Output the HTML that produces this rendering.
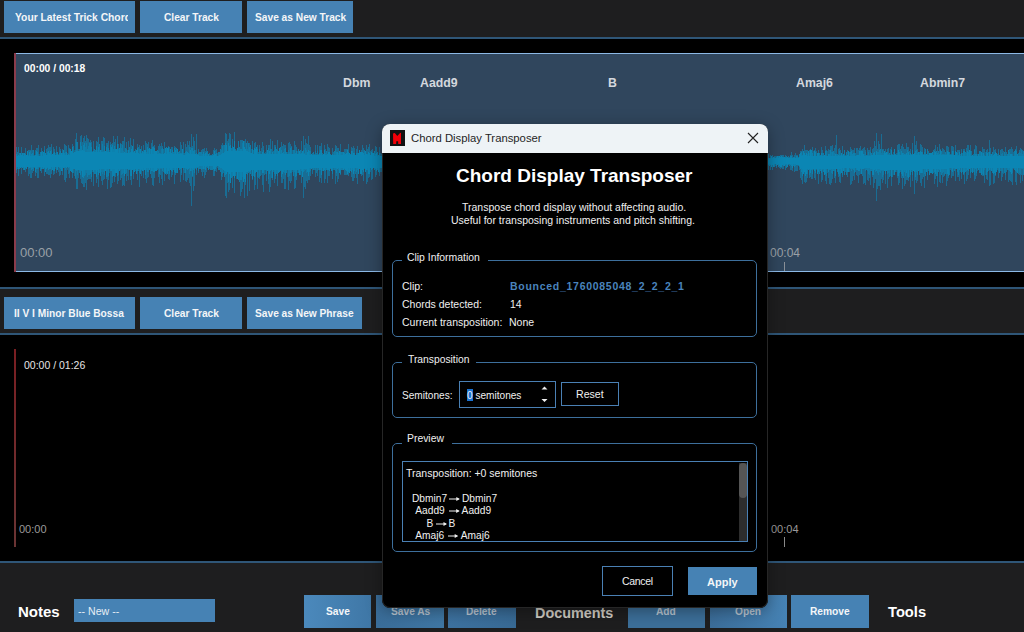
<!DOCTYPE html>
<html><head><meta charset="utf-8">
<style>
*{margin:0;padding:0;box-sizing:border-box}
html,body{width:1024px;height:632px;overflow:hidden;background:#000;font-family:"Liberation Sans",sans-serif}
.a{position:absolute}
.tb{position:absolute;left:0;width:1024px;background:#1e1e1f}
.ln{position:absolute;left:0;width:1024px;background:#2f5677}
.btn{position:absolute;background:#4682b4;color:#f4f6f8;font-weight:bold;font-size:10.2px;text-align:center;white-space:nowrap;overflow:hidden}
.t{position:absolute;white-space:pre;line-height:1}
</style></head><body>
<!-- top toolbar -->
<div class="tb" style="top:0;height:37px"></div>
<div class="ln" style="top:37px;height:2px"></div>
<div class="btn" style="left:4px;top:1px;width:131px;height:32px"><div class="a" style="left:11px;top:0;width:113px;height:32px;overflow:hidden"><span class="t" style="left:0;top:12px;font-size:10.3px">Your Latest Trick Chord</span></div></div>
<div class="btn" style="left:140px;top:1px;width:102px;height:32px"><span class="t" style="left:24px;top:12px;">Clear Track</span></div>
<div class="btn" style="left:247px;top:1px;width:106px;height:32px"><span class="t" style="left:8px;top:12px;">Save as New Track</span></div>

<!-- waveform panel 1 -->
<div class="a" style="left:14px;top:53px;width:1010px;height:219px;background:#30465d;border-top:1px solid #8cb9e6;border-bottom:1px solid #8cb9e6"></div>
<div class="a" style="left:14px;top:53px;width:2px;height:219px;background:#8a3c4c"></div>
<svg class="a" style="left:0;top:0" width="1024" height="300" viewBox="0 0 1024 300">
<path d="M16 147.0V172.7M18 146.7V176.2M21 147.3V173.5M25 148.4V172.3M28 150.4V176.1M29 150.4V174.2M30 150.3V177.9M31 145.2V177.6M32 149.8V173.2M35 150.2V175.9M36 147.8V173.0M37 147.7V178.3M38 145.4V178.1M41 147.9V173.1M44 145.5V176.2M46 149.4V174.1M47 148.1V173.9M48 144.7V175.1M49 146.8V175.2M50 147.4V177.7M51 144.2V174.1M53 146.7V174.5M54 149.3V173.6M56 145.7V172.6M59 146.5V175.9M60 148.6V175.0M62 148.9V174.6M64 143.9V179.6M65 144.5V181.6M66 146.2V177.9M68 145.0V174.2M69 147.8V177.5M72 143.9V178.3M75 139.1V179.4M76 132.8V188.6M77 141.6V189.0M80 135.5V178.8M81 135.0V183.3M82 141.6V183.8M83 138.2V186.8M84 136.4V187.3M85 141.3V183.4M86 134.7V189.7M87 138.1V179.6M88 138.6V178.5M89 142.1V179.2M90 139.5V178.8M91 142.2V181.7M93 141.4V186.0M96 140.7V182.9M97 142.2V179.2M98 137.4V187.1M101 141.1V181.3M102 141.0V184.8M103 136.8V180.4M104 138.4V178.6M106 142.8V178.7M107 143.4V188.9M108 141.1V180.0M110 141.7V188.2M111 143.5V186.8M112 143.0V182.7M113 136.0V175.5M114 142.2V182.0M115 138.6V177.4M117 136.1V183.6M118 143.8V181.4M120 143.2V180.4M121 144.0V178.4M122 141.2V186.1M123 140.6V184.6M124 136.7V186.1M126 141.6V180.6M128 140.9V179.6M130 138.2V179.7M131 144.9V184.8M133 139.1V178.8M137 144.4V180.2M139 145.0V186.5M141 146.0V176.0M143 144.6V178.1M145 141.4V178.5M146 143.3V182.9M147 144.0V177.7M148 142.2V177.4M151 142.6V177.5M152 140.2V185.4M153 145.8V185.7M154 145.0V177.7M158 146.4V176.9M159 144.0V182.6M160 145.6V175.2M161 142.7V178.7M162 145.6V185.0M164 141.8V180.6M166 147.1V175.2M168 145.6V178.7M169 147.0V180.1M171 146.8V176.8M172 146.7V175.4M174 145.8V183.9M175 146.9V174.6M180 142.1V181.5M181 145.2V174.8M183 142.4V179.8M185 144.3V180.7M186 147.3V181.8M187 140.7V180.1M188 145.4V178.1M189 141.2V181.5M189 143.0V183.0M190 146.6V186.1M191 142.6V185.7M191 134.0V206.0M192 145.8V176.9M193 137.0V191.0M194 145.6V175.1M194 141.0V186.0M196 148.3V174.5M196 134.0V170.1M198 149.2V172.7M201 150.3V171.6M202 149.2V176.3M203 149.0V172.2M204 148.0V178.4M205 151.0V175.0M206 148.1V172.4M213 149.7V176.2M214 148.3V175.8M215 149.7V171.0M216 149.1V172.0M221 144.9V180.1M222 143.4V177.0M225 133.4V196.2M226 134.4V198.0M228 139.4V191.6M229 132.8V183.7M229 137.0V190.0M230 133.7V183.1M232 138.5V188.1M234 132.2V192.5M240 140.0V196.2M241 139.6V191.9M242 140.4V189.1M244 140.7V197.5M245 139.4V185.1M247 141.1V195.9M249 143.4V191.3M252 140.9V179.5M254 143.0V189.6M255 141.6V184.8M257 145.1V188.5M259 144.9V179.0M262 142.3V184.9M263 145.5V191.5M266 144.5V180.9M268 145.4V184.1M269 144.9V191.5M270 139.1V187.0M272 141.4V179.9M274 145.2V182.5M275 144.8V178.8M277 140.1V186.4M281 141.8V183.2M282 146.1V183.1M283 143.8V179.0M284 145.0V189.0M285 145.0V188.7M288 142.9V189.6M289 142.0V181.1M290 144.4V182.6M291 146.4V181.4M294 140.8V189.1M295 145.3V188.0M296 146.9V180.4M301 141.0V183.0M303 141.3V177.6M303 136.0V198.0M304 145.4V187.2M305 144.6V181.2M305 139.0V189.0M306 143.0V181.0M307 144.4V182.6M308 145.3V179.7M308 136.0V175.6M309 145.2V179.5M310 146.5V175.9M315 145.4V176.9M317 145.3V176.4M319 145.7V182.2M320 146.1V177.5M321 143.2V183.3M324 144.9V182.8M325 148.9V179.3M327 144.2V183.3M328 146.7V176.2M329 147.9V176.1M332 148.1V179.0M335 144.7V184.1M336 145.5V176.4M337 148.1V181.5M338 148.4V178.6M340 144.4V174.6M344 149.0V174.6M345 149.3V175.1M346 149.4V174.8M347 149.1V174.7M348 144.1V175.5M351 146.7V176.8M352 147.9V180.5M353 146.0V180.8M354 148.3V178.4M356 148.6V178.3M357 146.1V184.2M361 149.7V176.3M362 145.2V175.1M363 148.1V180.8M366 144.8V183.5M367 148.5V181.9M368 146.9V178.0M369 144.3V176.5M371 149.6V179.8M372 148.8V179.0M375 145.8V176.6M376 146.7V175.2M379 147.2V176.2M768 153.9V170.0M770 154.8V169.7M772 155.4V169.7M774 155.7V167.3M776 155.6V168.4M779 155.5V168.4M780 154.9V169.4M781 154.6V167.6M782 155.1V168.5M783 155.2V169.0M785 154.7V169.9M790 155.0V169.7M791 152.4V169.9M792 154.7V171.0M794 155.1V171.8M795 152.9V170.8M796 154.7V171.3M797 154.9V170.9M799 153.5V170.3M800 150.6V178.0M801 150.5V179.5M802 149.0V184.3M804 145.1V181.7M805 150.0V183.1M806 149.9V182.4M807 149.8V178.0M809 149.8V177.9M810 149.0V176.6M811 150.0V179.2M812 146.9V178.7M814 149.6V178.3M815 147.5V179.5M818 149.9V184.4M821 147.3V182.3M822 149.6V179.9M825 146.3V181.0M826 149.8V183.9M828 149.3V177.8M829 150.0V184.0M830 145.6V184.9M831 146.4V182.6M832 145.0V178.5M834 147.7V178.3M835 145.1V183.2M836 135.0V169.3M838 148.5V176.6M839 148.4V182.3M840 149.5V182.7M842 145.5V177.2M847 149.5V177.1M850 146.8V185.1M851 149.3V183.8M852 149.6V180.5M853 150.3V176.0M854 147.8V179.5M856 147.6V175.3M857 147.5V175.5M858 149.8V182.8M859 148.2V175.2M860 146.4V174.2M861 149.7V174.4M862 149.0V175.5M863 147.6V184.0M864 146.5V183.4M865 149.8V184.6M867 148.3V179.7M868 150.0V181.4M869 149.8V177.9M870 147.4V184.8M872 149.0V176.5M873 148.1V187.6M874 149.6V178.8M874 141.0V183.0M875 146.2V178.5M876 133.0V201.0M877 148.5V188.8M878 141.0V186.0M879 143.9V186.2M880 148.6V189.8M881 147.0V178.5M881 134.0V173.0M882 149.0V182.5M883 148.9V180.3M885 148.9V183.7M887 148.9V188.2M888 147.8V179.1M891 147.0V185.7M897 145.3V178.2M898 143.5V184.5M899 144.0V182.5M901 145.6V178.1M902 143.6V189.1M903 147.1V178.2M904 148.8V185.5M905 148.5V183.6M906 143.4V180.0M907 147.4V179.5M908 147.0V181.4M910 148.5V186.5M912 144.7V178.1M912 143.0V181.0M914 149.0V182.0M914 136.0V194.0M915 144.8V179.5M916 148.8V183.4M916 141.0V183.0M917 148.9V181.1M920 144.2V182.6M921 144.8V185.5M922 147.3V179.1M924 147.7V188.4M927 148.6V179.5M934 148.6V184.0M935 145.4V179.1M937 146.6V186.7M939 143.8V181.6M940 148.6V183.2M942 148.2V182.5M943 149.1V176.7M944 149.6V176.4M946 145.5V185.8M947 145.5V180.8M948 147.1V177.9M951 146.0V177.7M952 146.4V175.7M953 147.3V175.8M955 145.1V180.6M957 149.9V176.6M958 149.9V177.0M959 149.8V181.0M961 148.7V178.8M963 149.1V175.1M964 148.8V184.3M966 147.6V180.6M967 144.7V179.2M968 144.6V175.2M970 145.0V178.0M974 149.4V180.6M975 144.8V179.4M976 146.1V176.1M982 146.7V175.8M983 149.2V175.9M984 149.1V183.2M986 149.9V178.6M987 148.8V180.0M989 146.3V179.5M989 140.0V186.0M990 147.8V184.9M993 147.3V183.9M994 149.9V183.2M995 149.4V175.8M998 148.7V178.4M1001 148.7V181.3M1002 149.2V176.7M1005 146.9V179.8M1008 149.9V182.2M1009 149.0V180.0M1010 148.8V181.1M1011 147.4V181.6M1012 149.2V185.4M1015 149.3V181.5M1016 146.2V185.0M1019 149.8V175.1M1020 148.3V183.0M1021 149.4V175.1M1022 149.8V181.2" stroke="#0f7eac" stroke-opacity="0.7" stroke-width="1" fill="none" shape-rendering="crispEdges"/><path d="M18 155.0V168.6M20 152.6V167.8M21 155.1V167.2M22 152.6V168.0M24 153.4V169.8M26 154.8V168.5M27 151.3V167.1M29 151.5V168.4M35 154.6V171.9M36 151.0V169.0M41 151.9V169.2M43 151.9V168.6M45 153.4V171.8M46 154.5V169.2M48 151.1V169.9M49 153.0V168.8M50 151.0V168.9M52 154.3V169.7M54 151.7V170.5M57 151.5V169.9M61 153.2V170.8M63 149.7V167.7M66 152.0V168.0M70 149.3V170.7M71 151.4V171.9M72 146.8V172.9M82 150.1V177.2M93 150.8V171.9M96 145.5V177.0M98 146.8V174.7M100 149.7V176.1M105 150.8V170.9M111 146.8V170.7M115 148.7V173.0M116 149.0V173.2M117 144.0V176.3M119 147.9V171.3M124 151.6V176.2M128 150.0V169.6M131 148.9V176.2M132 145.9V170.4M134 151.4V171.9M136 150.0V174.4M137 147.6V170.9M140 149.4V173.7M142 151.3V171.1M144 149.6V170.0M145 149.9V174.6M149 147.9V169.5M151 148.5V170.8M154 148.4V172.2M155 150.6V171.4M156 150.8V171.4M164 152.9V172.5M165 148.0V173.7M167 147.7V174.3M168 147.3V170.9M170 148.7V169.6M171 153.4V171.4M175 149.6V173.1M177 148.9V173.0M182 149.2V168.2M187 151.6V170.4M188 153.0V169.1M190 150.0V170.8M203 151.8V169.3M205 153.2V169.7M208 153.5V169.8M213 154.7V169.0M214 151.3V171.0M215 153.8V169.2M226 145.0V174.1M229 145.6V174.3M230 144.5V182.5M233 146.7V176.3M234 140.6V177.8M237 147.9V179.4M243 141.1V182.0M244 147.4V179.4M245 149.3V182.1M252 149.2V178.6M254 147.5V177.3M255 148.7V173.0M256 146.9V172.3M262 151.7V172.8M267 150.1V171.3M269 151.4V174.4M272 151.8V177.5M278 151.3V173.4M279 148.0V171.7M282 152.8V173.6M299 151.1V174.6M302 151.3V176.5M307 152.1V171.6M308 150.2V175.6M311 154.0V169.3M319 153.2V169.8M321 149.5V174.8M323 153.8V170.7M324 149.9V169.7M327 153.7V169.7M328 152.2V169.5M329 152.4V170.6M331 154.5V170.6M337 151.9V168.6M339 151.1V173.4M343 152.3V170.4M345 154.0V170.3M346 152.9V171.0M347 149.8V173.5M349 152.6V172.7M351 150.7V171.6M353 152.6V174.2M358 152.7V173.5M359 150.2V169.0M360 151.5V173.9M361 152.2V174.2M362 152.2V170.4M363 153.4V172.1M365 150.9V171.5M366 154.1V170.4M368 151.7V173.6M369 153.3V173.9M371 151.6V169.5M372 152.6V169.0M373 153.4V168.3M376 152.6V171.2M378 154.5V172.0M771 155.9V166.6M772 157.8V164.6M773 156.8V167.1M777 156.3V164.7M779 155.7V165.9M780 157.1V166.9M781 155.6V166.8M782 156.6V164.9M784 156.6V165.9M787 157.3V167.0M792 157.5V167.7M800 153.4V168.8M803 151.0V173.6M804 152.5V171.9M805 154.8V175.6M806 152.9V173.8M808 151.3V169.7M810 150.2V173.0M814 151.1V171.4M817 153.3V174.0M818 153.2V172.0M821 152.7V172.5M824 154.5V174.5M828 154.4V171.7M835 153.8V175.7M838 154.6V173.7M841 152.9V172.5M843 154.0V170.9M847 154.7V172.2M848 150.5V171.5M857 155.3V169.8M858 154.5V170.7M859 151.0V170.5M861 151.0V173.7M862 151.2V169.2M863 153.9V169.3M873 152.7V175.4M874 151.6V170.1M876 150.7V171.1M884 150.9V170.8M885 152.9V173.7M886 152.2V170.7M891 150.0V176.5M894 149.4V175.3M898 149.7V176.2M902 153.0V176.3M906 153.1V172.9M908 151.8V177.7M910 153.0V174.5M913 154.1V170.8M914 153.4V172.3M918 151.9V171.2M920 151.0V172.9M921 152.2V173.3M926 154.1V171.8M929 152.7V175.2M930 152.7V173.1M931 153.4V172.8M932 152.3V173.5M935 151.7V173.6M940 149.7V172.0M947 150.5V174.0M948 151.7V175.8M952 150.5V172.2M955 150.6V169.3M956 152.1V169.1M959 152.0V170.4M961 152.8V173.2M967 150.6V169.9M969 150.0V168.8M972 154.6V173.4M978 154.3V170.0M981 151.9V174.6M983 152.5V174.8M987 153.0V172.0M989 151.9V170.0M991 154.3V171.1M993 154.7V173.9M994 153.8V172.8M995 152.0V174.5M996 152.7V171.5M999 154.8V172.6M1010 154.0V171.5M1011 154.0V174.0M1017 153.9V172.6" stroke="#0b86b4" stroke-opacity="1.0" stroke-width="1" fill="none" shape-rendering="crispEdges"/><path d="M16 153.5V169.8M19 152.7V169.0M23 153.0V170.3M25 153.8V168.2M31 154.3V169.8M32 153.1V168.9M33 150.4V171.0M37 152.1V168.9M40 152.2V170.5M42 151.2V169.0M44 150.0V167.8M47 151.9V167.9M53 152.5V171.4M59 153.2V167.5M60 150.6V169.2M62 152.5V170.6M64 153.0V168.4M68 154.3V168.3M79 149.1V172.8M80 141.6V175.1M81 145.9V171.1M83 144.5V178.0M84 143.2V176.1M90 143.1V174.1M91 147.3V176.8M94 149.1V174.2M95 150.1V174.3M99 144.0V172.6M104 145.7V174.9M106 146.5V176.8M108 147.8V175.7M110 144.9V171.3M112 144.7V176.6M113 148.9V175.5M114 145.8V175.6M125 148.0V173.8M129 147.3V169.9M130 151.9V176.4M133 151.6V173.7M141 152.5V169.6M143 151.7V170.7M147 146.8V171.9M150 149.0V173.6M152 147.1V171.1M153 147.1V171.8M157 149.6V170.0M159 153.1V174.1M162 147.6V170.8M169 151.8V174.0M172 149.9V172.1M173 151.8V169.5M174 147.9V171.8M176 147.9V173.2M178 152.3V168.4M179 151.0V169.8M180 152.8V169.2M185 152.1V172.8M186 151.1V168.5M192 147.7V175.7M193 150.7V169.6M194 150.0V173.0M196 153.1V170.1M197 153.6V168.2M199 151.9V169.2M200 152.2V169.3M206 152.0V167.1M207 151.3V168.1M210 154.7V169.9M211 154.9V170.2M212 153.9V169.9M216 153.1V167.0M218 152.3V170.0M219 151.7V169.8M220 148.7V171.5M224 145.0V176.6M225 142.5V174.5M228 143.2V181.7M231 148.0V177.5M235 149.2V176.2M238 140.8V179.5M239 146.9V182.0M240 148.6V180.0M241 148.8V179.9M246 142.8V174.0M248 142.8V172.7M249 146.8V172.0M250 145.0V174.4M263 149.9V173.3M270 148.9V171.0M275 146.5V176.0M276 148.5V173.5M280 147.2V170.7M281 150.2V177.2M283 152.3V172.2M285 147.8V174.7M286 151.7V172.8M290 148.2V172.5M293 149.9V176.1M295 152.5V177.4M296 151.4V175.9M298 149.3V173.3M300 149.6V174.7M301 153.1V170.5M303 149.6V171.7M309 151.0V171.5M313 151.8V169.7M320 149.5V170.3M326 150.9V169.9M330 154.3V169.0M332 153.5V173.9M334 151.3V170.2M336 151.8V172.7M340 152.1V173.6M341 151.6V169.9M342 152.0V170.1M344 153.0V169.0M348 151.7V171.9M350 154.3V170.8M354 152.5V171.2M364 150.4V168.7M367 153.7V170.0M374 151.2V170.3M375 153.9V168.6M377 152.0V169.8M768 157.7V165.4M769 158.0V166.1M770 158.0V165.3M776 156.9V166.1M778 156.4V166.7M783 157.4V166.3M786 155.7V167.5M790 155.7V164.8M791 156.1V166.0M793 157.1V165.9M794 156.8V166.8M796 155.8V164.9M797 156.4V164.9M801 151.5V171.9M802 154.5V175.9M811 150.3V170.3M812 153.1V173.8M815 152.0V172.8M819 153.1V174.1M820 154.6V170.5M823 152.5V172.3M825 150.7V174.2M829 153.7V170.1M830 150.3V170.3M832 152.0V173.6M833 151.1V170.8M837 154.0V171.7M844 150.4V175.1M846 152.4V174.7M850 152.1V169.2M851 151.3V171.2M852 154.1V168.9M853 153.2V170.0M854 153.1V173.3M856 154.5V169.8M860 151.0V169.4M866 154.8V170.0M871 152.6V170.7M872 154.7V174.8M889 153.2V176.7M895 153.5V172.3M899 151.7V173.3M901 150.6V174.3M904 153.8V172.0M912 150.1V174.8M915 151.1V177.0M917 153.1V174.7M919 151.8V174.8M922 152.0V173.0M925 149.3V176.0M934 150.9V172.2M936 150.8V176.4M937 152.8V176.4M938 151.2V171.6M939 154.2V169.9M941 151.1V175.2M945 151.8V173.8M949 151.5V175.3M954 154.6V171.2M957 153.3V171.8M958 154.9V174.7M963 151.0V174.0M964 151.0V172.6M965 152.2V171.6M968 152.4V170.7M970 151.4V173.4M975 153.9V169.2M976 154.4V172.7M979 150.6V172.8M980 150.5V173.4M986 151.5V174.6M992 151.9V173.4M1004 151.8V172.7M1007 153.6V170.2M1008 150.2V169.6M1014 151.0V169.8M1015 150.3V171.4M1023 150.7V174.5" stroke="#0b86b4" stroke-opacity="0.85" stroke-width="1" fill="none" shape-rendering="crispEdges"/><path d="M17 151.8V169.4M34 155.0V168.0M56 152.3V169.8M73 146.3V173.4M76 142.0V171.0M87 148.9V177.3M88 146.2V174.5M89 143.1V174.8M118 149.1V174.6M120 144.3V169.9M122 145.1V173.6M126 149.0V173.3M135 149.3V171.2M138 146.9V171.2M146 151.9V170.1M148 149.4V171.9M158 151.4V169.0M163 149.1V171.8M166 147.4V172.6M181 153.0V172.6M184 153.3V172.6M191 147.6V170.5M198 153.1V171.4M201 151.9V169.5M202 154.1V168.5M204 154.4V169.3M209 153.1V169.0M222 146.2V173.6M223 144.8V173.0M232 145.9V176.6M253 149.8V176.3M257 148.7V177.3M258 152.3V178.1M259 149.0V176.6M260 150.7V175.8M264 152.6V174.7M266 152.9V174.0M268 148.2V178.5M271 149.3V177.9M273 150.7V172.1M274 149.9V173.8M277 149.7V176.4M294 150.2V172.4M305 148.1V169.5M312 152.7V174.0M314 154.1V170.3M316 152.6V173.4M318 153.6V169.9M322 153.4V170.8M325 153.0V171.0M333 151.6V169.9M352 151.4V169.7M355 154.5V173.9M356 152.5V171.9M357 153.1V169.9M379 153.0V172.5M382 154.9V170.3M785 156.7V165.0M788 156.1V165.1M789 156.8V166.2M795 157.6V166.4M798 156.7V165.6M799 154.3V166.8M836 153.5V169.3M839 150.5V175.8M840 154.5V173.9M842 154.9V175.4M845 155.0V172.2M849 151.9V172.1M855 152.6V171.9M867 154.5V171.0M868 152.3V174.0M870 152.1V171.2M875 154.5V171.7M877 151.5V173.1M878 151.9V175.2M879 149.7V171.5M880 149.4V172.7M887 151.7V173.6M892 154.2V176.5M900 149.1V172.1M903 152.8V177.6M905 154.1V176.1M907 149.8V176.9M909 151.0V176.5M911 154.1V171.5M916 150.0V172.2M923 154.3V176.8M924 152.0V173.7M928 151.3V170.6M933 150.2V172.6M942 153.9V173.4M943 154.0V171.5M950 153.9V170.3M960 154.0V172.1M962 152.6V172.0M966 152.7V171.2M971 151.2V172.4M973 153.9V171.5M974 150.1V174.5M988 152.2V171.2M997 154.1V169.8M1000 150.3V171.4M1006 151.6V172.3M1009 151.7V171.4M1016 151.1V172.1M1018 152.9V174.0M1022 154.1V169.1" stroke="#0b86b4" stroke-opacity="0.7" stroke-width="1" fill="none" shape-rendering="crispEdges"/><path d="M28 155.0V168.9M30 150.8V167.7M38 154.3V169.0M39 153.7V168.0M51 150.1V171.0M55 152.5V169.1M58 154.0V171.5M65 152.4V170.3M67 152.9V169.5M69 149.3V172.6M74 149.8V176.4M75 149.8V177.7M77 141.6V174.6M78 149.2V177.8M85 146.8V175.0M86 142.8V172.6M92 150.7V172.4M97 149.9V171.9M101 150.2V172.0M102 143.8V174.3M103 151.2V171.7M107 144.8V177.4M109 149.8V172.8M121 148.0V175.2M123 151.2V172.8M127 150.1V176.1M139 148.9V173.3M160 152.7V169.3M161 149.1V169.4M183 153.3V169.8M189 147.1V174.1M195 150.1V169.0M217 152.9V168.0M221 150.1V175.5M227 141.2V183.0M236 149.6V179.4M242 142.7V176.8M247 148.8V174.5M251 148.6V175.5M261 147.8V174.8M265 151.9V174.4M284 148.6V172.5M287 152.3V177.1M288 149.6V176.7M289 151.8V175.8M291 147.3V172.6M292 150.2V171.7M297 150.9V172.6M304 152.6V171.3M306 150.3V173.3M310 150.7V171.3M315 150.7V170.3M317 151.4V171.3M335 149.4V171.2M338 153.2V170.0M370 150.8V172.4M380 153.3V171.6M381 153.5V172.2M774 157.2V166.7M775 155.8V166.3M807 154.3V174.4M809 153.2V174.9M813 151.1V170.0M816 151.1V170.2M822 152.5V170.3M826 150.5V175.5M827 151.0V173.4M831 151.9V172.9M834 153.2V170.7M864 154.4V169.4M865 152.1V171.0M869 154.9V175.3M881 152.9V171.1M882 150.4V176.5M883 152.9V174.7M888 153.6V172.8M890 149.4V175.6M893 151.9V175.3M896 152.7V171.8M897 153.0V175.8M927 149.4V174.9M944 154.3V174.8M946 153.7V174.0M951 154.0V171.4M953 151.4V169.4M977 154.1V170.9M982 153.4V174.2M984 154.5V170.3M985 151.5V174.9M990 153.8V169.9M998 152.9V171.1M1001 153.5V170.5M1002 153.1V173.2M1003 151.2V173.6M1005 154.4V174.9M1012 154.4V173.0M1013 151.8V169.1M1019 152.1V172.9M1020 152.7V173.9M1021 150.3V169.1" stroke="#0b86b4" stroke-opacity="0.55" stroke-width="1" fill="none" shape-rendering="crispEdges"/><path d="M16 156.0V166.5M17 156.0V166.5M18 156.0V166.5M19 155.9V166.5M20 155.9V166.5M21 155.9V166.5M22 155.9V166.5M23 155.9V166.5M24 155.8V166.5M25 155.8V166.5M26 155.8V166.5M27 155.8V166.5M28 155.8V166.5M29 155.7V166.5M30 155.7V166.5M31 155.7V166.5M32 155.7V166.5M33 155.6V166.5M34 155.6V166.5M35 155.6V166.5M36 155.6V166.5M37 155.6V166.5M38 155.5V166.5M39 155.5V166.5M40 155.5V166.5M41 155.5V166.5M42 155.5V166.5M43 155.4V166.6M44 155.4V166.6M45 155.4V166.6M46 155.4V166.6M47 155.4V166.6M48 155.4V166.6M49 155.3V166.7M50 155.3V166.7M51 155.3V166.7M52 155.3V166.7M53 155.3V166.7M54 155.2V166.8M55 155.2V166.8M56 155.2V166.8M57 155.2V166.8M58 155.2V166.8M59 155.2V166.8M60 155.1V166.9M61 155.1V166.9M62 155.1V166.9M63 155.1V166.9M64 155.1V166.9M65 155.1V166.9M66 155.0V167.0M67 155.0V167.0M68 155.0V167.0M69 154.5V167.4M70 154.0V167.8M71 153.5V168.1M72 153.0V168.5M73 152.5V168.9M74 152.0V169.2M75 151.5V169.6M76 151.0V170.0M77 151.1V170.0M78 151.1V169.9M79 151.2V169.9M80 151.2V169.9M81 151.3V169.9M82 151.3V169.8M83 151.4V169.8M84 151.4V169.8M85 151.5V169.8M86 151.5V169.7M87 151.6V169.7M88 151.6V169.7M89 151.7V169.7M90 151.7V169.6M91 151.8V169.6M92 151.8V169.6M93 151.9V169.6M94 151.9V169.5M95 152.0V169.5M96 152.0V169.5M97 152.0V169.5M98 152.1V169.4M99 152.1V169.4M100 152.1V169.4M101 152.1V169.4M102 152.2V169.3M103 152.2V169.3M104 152.2V169.3M105 152.2V169.3M106 152.2V169.3M107 152.3V169.2M108 152.3V169.2M109 152.3V169.2M110 152.3V169.2M111 152.3V169.2M112 152.4V169.1M113 152.4V169.1M114 152.4V169.1M115 152.4V169.1M116 152.5V169.0M117 152.5V169.0M118 152.5V169.0M119 152.5V169.0M120 152.6V169.0M121 152.6V168.9M122 152.7V168.9M123 152.7V168.9M124 152.8V168.9M125 152.8V168.8M126 152.9V168.8M127 152.9V168.8M128 153.0V168.8M129 153.0V168.8M130 153.0V168.7M131 153.1V168.7M132 153.1V168.7M133 153.2V168.7M134 153.2V168.6M135 153.3V168.6M136 153.3V168.6M137 153.4V168.6M138 153.4V168.5M139 153.5V168.5M140 153.5V168.5M141 153.5V168.5M142 153.5V168.5M143 153.6V168.4M144 153.6V168.4M145 153.6V168.4M146 153.6V168.4M147 153.7V168.3M148 153.7V168.3M149 153.7V168.3M150 153.7V168.3M151 153.7V168.3M152 153.8V168.2M153 153.8V168.2M154 153.8V168.2M155 153.8V168.2M156 153.9V168.1M157 153.9V168.1M158 153.9V168.1M159 153.9V168.1M160 153.9V168.1M161 154.0V168.0M162 154.0V168.0M163 154.0V168.0M164 154.0V168.0M165 154.1V167.9M166 154.1V167.9M167 154.1V167.9M168 154.1V167.9M169 154.1V167.9M170 154.2V167.8M171 154.2V167.8M172 154.2V167.8M173 154.2V167.8M174 154.3V167.7M175 154.3V167.7M176 154.3V167.7M177 154.3V167.7M178 154.3V167.7M179 154.4V167.6M180 154.4V167.6M181 154.4V167.6M182 154.4V167.6M183 154.5V167.5M184 154.5V167.5M185 154.5V167.5M186 154.4V167.6M187 154.2V167.8M188 154.1V167.9M189 153.9V168.1M190 153.8V168.2M191 153.6V168.4M192 153.5V168.5M193 153.8V168.2M194 154.1V167.9M195 154.4V167.6M196 154.8V167.2M197 155.1V166.9M198 155.4V166.6M199 155.7V166.3M200 156.0V166.0M201 156.0V166.0M202 156.0V166.0M203 156.0V166.0M204 156.0V166.0M205 156.0V166.0M206 156.0V166.0M207 156.0V166.0M208 156.0V166.0M209 156.0V166.0M210 156.0V166.0M211 156.0V166.0M212 156.0V166.0M213 156.0V166.0M214 156.0V166.0M215 156.0V166.0M216 156.0V166.0M217 156.0V166.0M218 156.0V166.0M219 155.3V166.8M220 154.6V167.5M221 153.9V168.2M222 153.2V169.0M223 152.6V169.8M224 151.9V170.5M225 151.2V171.2M226 150.5V172.0M227 150.5V172.0M228 150.6V172.0M229 150.6V172.0M230 150.6V172.0M231 150.6V172.0M232 150.7V172.0M233 150.7V172.0M234 150.7V172.0M235 150.7V172.0M236 150.8V172.0M237 150.8V172.0M238 150.8V172.0M239 150.8V172.0M240 150.8V172.0M241 150.9V172.0M242 150.9V172.0M243 150.9V172.0M244 150.9V172.0M245 151.0V172.0M246 151.0V172.0M247 151.4V171.7M248 151.8V171.3M249 152.2V171.0M250 152.7V170.7M251 153.1V170.3M252 153.5V170.0M253 153.5V170.0M254 153.5V170.0M255 153.5V170.0M256 153.5V170.0M257 153.6V169.9M258 153.6V169.9M259 153.6V169.9M260 153.6V169.9M261 153.6V169.9M262 153.6V169.9M263 153.6V169.9M264 153.6V169.9M265 153.6V169.9M266 153.7V169.8M267 153.7V169.8M268 153.7V169.8M269 153.7V169.8M270 153.7V169.8M271 153.7V169.8M272 153.7V169.8M273 153.7V169.8M274 153.7V169.8M275 153.8V169.8M276 153.8V169.7M277 153.8V169.7M278 153.8V169.7M279 153.8V169.7M280 153.8V169.7M281 153.8V169.7M282 153.8V169.7M283 153.8V169.7M284 153.8V169.7M285 153.9V169.6M286 153.9V169.6M287 153.9V169.6M288 153.9V169.6M289 153.9V169.6M290 153.9V169.6M291 153.9V169.6M292 153.9V169.6M293 153.9V169.6M294 154.0V169.5M295 154.0V169.5M296 154.0V169.5M297 154.0V169.5M298 154.0V169.5M299 154.1V169.4M300 154.1V169.3M301 154.2V169.2M302 154.3V169.1M303 154.4V169.0M304 154.4V168.9M305 154.5V168.8M306 154.6V168.6M307 154.6V168.5M308 154.7V168.4M309 154.8V168.3M310 154.9V168.2M311 154.9V168.1M312 155.0V168.0M313 155.0V168.0M314 155.0V168.0M315 155.0V168.0M316 155.0V168.0M317 155.0V168.0M318 155.0V168.0M319 155.1V167.9M320 155.1V167.9M321 155.1V167.9M322 155.1V167.9M323 155.1V167.9M324 155.1V167.9M325 155.1V167.9M326 155.1V167.9M327 155.1V167.9M328 155.1V167.9M329 155.1V167.9M330 155.1V167.9M331 155.1V167.9M332 155.1V167.9M333 155.2V167.8M334 155.2V167.8M335 155.2V167.8M336 155.2V167.8M337 155.2V167.8M338 155.2V167.8M339 155.2V167.8M340 155.2V167.8M341 155.2V167.8M342 155.2V167.8M343 155.2V167.8M344 155.2V167.8M345 155.2V167.8M346 155.2V167.8M347 155.3V167.7M348 155.3V167.7M349 155.3V167.7M350 155.3V167.7M351 155.3V167.7M352 155.3V167.7M353 155.3V167.7M354 155.3V167.7M355 155.3V167.7M356 155.3V167.7M357 155.3V167.7M358 155.3V167.7M359 155.3V167.7M360 155.4V167.6M361 155.4V167.6M362 155.4V167.6M363 155.4V167.6M364 155.4V167.6M365 155.4V167.6M366 155.4V167.6M367 155.4V167.6M368 155.4V167.6M369 155.4V167.6M370 155.4V167.6M371 155.4V167.6M372 155.4V167.6M373 155.4V167.6M374 155.5V167.5M375 155.5V167.5M376 155.5V167.5M377 155.5V167.5M378 155.5V167.5M379 155.5V167.5M380 155.5V167.5M381 155.5V167.5M382 155.5V167.5M768 158.5V164.0M769 158.5V164.0M770 158.5V164.0M771 158.4V164.1M772 158.4V164.1M773 158.4V164.1M774 158.4V164.1M775 158.4V164.1M776 158.4V164.1M777 158.3V164.2M778 158.3V164.2M779 158.3V164.2M780 158.3V164.2M781 158.3V164.2M782 158.3V164.2M783 158.2V164.2M784 158.2V164.3M785 158.2V164.3M786 158.2V164.3M787 158.2V164.3M788 158.2V164.3M789 158.2V164.3M790 158.1V164.4M791 158.1V164.4M792 158.1V164.4M793 158.1V164.4M794 158.1V164.4M795 158.1V164.4M796 158.0V164.5M797 158.0V164.5M798 158.0V164.5M799 157.4V165.5M800 156.8V166.5M801 156.1V167.5M802 155.5V168.5M803 155.5V168.5M804 155.5V168.5M805 155.5V168.5M806 155.5V168.5M807 155.5V168.5M808 155.5V168.5M809 155.5V168.5M810 155.5V168.5M811 155.5V168.5M812 155.5V168.5M813 155.5V168.5M814 155.5V168.5M815 155.5V168.5M816 155.5V168.5M817 155.5V168.5M818 155.5V168.5M819 155.5V168.5M820 155.5V168.5M821 155.5V168.5M822 155.5V168.5M823 155.5V168.5M824 155.5V168.5M825 155.5V168.5M826 155.5V168.5M827 155.5V168.5M828 155.5V168.5M829 155.5V168.5M830 155.5V168.5M831 155.5V168.5M832 155.5V168.5M833 155.5V168.5M834 155.5V168.5M835 155.5V168.5M836 155.5V168.5M837 155.5V168.5M838 155.5V168.5M839 155.5V168.5M840 155.5V168.5M841 155.5V168.4M842 155.6V168.4M843 155.6V168.3M844 155.6V168.3M845 155.6V168.2M846 155.7V168.2M847 155.7V168.2M848 155.7V168.1M849 155.7V168.1M850 155.8V168.0M851 155.8V167.9M852 155.8V167.9M853 155.8V167.8M854 155.8V167.8M855 155.9V167.8M856 155.9V167.7M857 155.9V167.7M858 155.9V167.6M859 156.0V167.6M860 156.0V167.5M861 155.9V167.6M862 155.9V167.7M863 155.8V167.8M864 155.8V167.9M865 155.8V168.0M866 155.7V168.1M867 155.7V168.2M868 155.6V168.3M869 155.6V168.4M870 155.5V168.5M871 155.4V168.6M872 155.4V168.7M873 155.3V168.8M874 155.3V168.9M875 155.2V169.0M876 155.2V169.1M877 155.2V169.2M878 155.1V169.3M879 155.1V169.4M880 155.0V169.5M881 155.0V169.5M882 155.0V169.5M883 155.0V169.5M884 155.0V169.5M885 155.0V169.5M886 155.0V169.5M887 155.0V169.5M888 155.0V169.5M889 155.0V169.5M890 155.0V169.5M891 155.0V169.5M892 155.0V169.5M893 155.0V169.5M894 155.0V169.5M895 155.0V169.5M896 155.0V169.5M897 155.0V169.5M898 155.0V169.5M899 155.0V169.5M900 155.0V169.5M901 155.0V169.5M902 155.0V169.5M903 155.0V169.5M904 155.0V169.5M905 155.0V169.5M906 155.0V169.5M907 155.0V169.5M908 155.0V169.5M909 155.0V169.5M910 155.0V169.5M911 155.0V169.5M912 155.0V169.5M913 155.0V169.5M914 155.0V169.5M915 155.0V169.5M916 155.0V169.5M917 155.0V169.5M918 155.0V169.5M919 155.0V169.5M920 155.0V169.5M921 155.0V169.5M922 155.0V169.4M923 155.0V169.4M924 155.1V169.3M925 155.1V169.3M926 155.1V169.3M927 155.1V169.2M928 155.1V169.2M929 155.1V169.2M930 155.1V169.1M931 155.1V169.1M932 155.2V169.1M933 155.2V169.0M934 155.2V169.0M935 155.2V168.9M936 155.2V168.9M937 155.2V168.9M938 155.2V168.8M939 155.2V168.8M940 155.2V168.8M941 155.3V168.7M942 155.3V168.7M943 155.3V168.6M944 155.3V168.6M945 155.3V168.6M946 155.3V168.5M947 155.3V168.5M948 155.3V168.4M949 155.4V168.4M950 155.4V168.4M951 155.4V168.3M952 155.4V168.3M953 155.4V168.3M954 155.4V168.2M955 155.4V168.2M956 155.4V168.2M957 155.5V168.1M958 155.5V168.1M959 155.5V168.0M960 155.5V168.0M961 155.5V168.0M962 155.5V168.0M963 155.5V168.0M964 155.5V168.0M965 155.5V168.0M966 155.5V168.0M967 155.5V168.0M968 155.5V168.0M969 155.5V168.0M970 155.5V168.0M971 155.5V168.0M972 155.5V168.0M973 155.5V168.0M974 155.5V168.0M975 155.5V168.0M976 155.5V168.0M977 155.5V168.0M978 155.5V168.0M979 155.5V168.0M980 155.5V168.0M981 155.5V168.0M982 155.5V168.0M983 155.5V168.0M984 155.5V168.0M985 155.5V168.0M986 155.5V168.0M987 155.5V168.0M988 155.5V168.0M989 155.5V168.0M990 155.5V168.0M991 155.5V168.0M992 155.5V168.0M993 155.5V168.0M994 155.5V168.0M995 155.5V168.0M996 155.5V168.0M997 155.5V168.0M998 155.5V168.0M999 155.5V168.0M1000 155.5V168.0M1001 155.5V168.0M1002 155.5V168.0M1003 155.5V168.0M1004 155.5V168.0M1005 155.5V168.0M1006 155.5V168.0M1007 155.5V168.0M1008 155.5V168.0M1009 155.5V168.0M1010 155.5V168.0M1011 155.5V168.0M1012 155.5V168.0M1013 155.5V168.0M1014 155.5V168.0M1015 155.5V168.0M1016 155.5V168.0M1017 155.5V168.0M1018 155.5V168.0M1019 155.5V168.0M1020 155.5V168.0M1021 155.5V168.0M1022 155.5V168.0M1023 155.5V168.0" stroke="#0b86b4" stroke-width="1" fill="none" shape-rendering="crispEdges"/>
</svg>
<span class="t" style="left:24px;top:64px;font-size:10.3px;font-weight:bold;color:#fff">00:00 / 00:18</span>
<span class="t" style="left:20px;top:246px;font-size:13px;color:#9aa0a6">00:00</span>
<span class="t" style="left:770px;top:247px;font-size:12px;color:#9aa0a6">00:04</span>
<div class="a" style="left:784px;top:262px;width:1px;height:9px;background:#8a9098"></div>
<span class="t" style="left:343px;top:77px;font-size:12.3px;font-weight:bold;color:#d4d8de">Dbm</span>
<span class="t" style="left:420px;top:77px;font-size:12.3px;font-weight:bold;color:#d4d8de">Aadd9</span>
<span class="t" style="left:608px;top:77px;font-size:12.3px;font-weight:bold;color:#d4d8de">B</span>
<span class="t" style="left:796px;top:77px;font-size:12.3px;font-weight:bold;color:#d4d8de">Amaj6</span>
<span class="t" style="left:920px;top:77px;font-size:12.3px;font-weight:bold;color:#d4d8de">Abmin7</span>

<!-- second toolbar -->
<div class="ln" style="top:287px;height:2px"></div>
<div class="tb" style="top:289px;height:44px"></div>
<div class="ln" style="top:333px;height:2px"></div>
<div class="btn" style="left:4px;top:297px;width:131px;height:32px"><span class="t" style="left:10px;top:12px;">II V I Minor Blue Bossa</span></div>
<div class="btn" style="left:140px;top:297px;width:102px;height:32px"><span class="t" style="left:24px;top:12px;">Clear Track</span></div>
<div class="btn" style="left:247px;top:297px;width:115px;height:32px"><span class="t" style="left:8px;top:12px;">Save as New Phrase</span></div>

<!-- waveform panel 2 -->
<div class="a" style="left:14px;top:349px;width:2px;height:198px;background:linear-gradient(#7a1e22,#6a3434)"></div>
<span class="t" style="left:24px;top:360px;font-size:10.5px;color:#e6e6e6">00:00 / 01:26</span>
<span class="t" style="left:19px;top:524px;font-size:11px;color:#9a9a9a">00:00</span>
<span class="t" style="left:771px;top:524px;font-size:11px;color:#9a9a9a">00:04</span>
<div class="a" style="left:784px;top:537px;width:1px;height:10px;background:#8a8a8a"></div>

<!-- bottom bar -->
<div class="ln" style="top:561px;height:2px"></div>
<div class="tb" style="top:563px;height:69px"></div>
<span class="t" style="left:18px;top:604px;font-size:15px;font-weight:bold;color:#fff">Notes</span>
<div class="a" style="left:74px;top:599px;width:141px;height:23px;background:#4682b4"></div>
<span class="t" style="left:78px;top:606px;font-size:10.6px;color:#e8eef4">-- New --</span>
<div class="btn" style="left:304px;top:595px;width:67px;height:33px;background:linear-gradient(to right,#4b89bc,#3f77a6)"><span class="t" style="left:22px;top:12px;">Save</span></div>
<div class="btn" style="left:376px;top:595px;width:68px;height:33px;background:linear-gradient(to right,#3a6d99,#3f77a4);color:#b8c4d0"><span class="t" style="left:15px;top:12px;">Save As</span></div>
<div class="btn" style="left:448px;top:595px;width:68px;height:33px;background:linear-gradient(to right,#3d72a0,#386a95);color:#b8c4d0"><span class="t" style="left:18px;top:12px;">Delete</span></div>
<span class="t" style="left:535px;top:606px;font-size:14.4px;font-weight:bold;color:#d0ccc4">Documents</span>
<div class="btn" style="left:628px;top:595px;width:77px;height:33px;background:#3c6f99;color:#b8c4d0"><span class="t" style="left:28px;top:12px;">Add</span></div>
<div class="btn" style="left:710px;top:595px;width:77px;height:33px;background:linear-gradient(to right,#3b6d99,#4682b4);color:#b8c4d0"><span class="t" style="left:25px;top:12px;">Open</span></div>
<div class="btn" style="left:791px;top:595px;width:78px;height:33px"><span class="t" style="left:19px;top:12px;">Remove</span></div>
<span class="t" style="left:888px;top:605px;font-size:14.7px;font-weight:bold;color:#fff">Tools</span>

<!-- dialog -->
<div class="a" style="left:382px;top:124px;width:386px;height:484px;background:#000;border-radius:8px;overflow:hidden;box-shadow:0 3px 16px rgba(0,0,0,0.35)">
  <div class="a" style="left:0;top:0;width:386px;height:29px;background:#eef3f6"></div>
  <div class="a" style="left:0;top:29px;width:386px;height:455px;border:1px solid #262626;border-top:none;border-radius:0 0 8px 8px"></div>
</div>
<!-- icon -->
<div class="a" style="left:390px;top:130px;width:15px;height:16px;background:#121212"></div>
<svg class="a" style="left:390px;top:130px" width="15" height="15" viewBox="0 0 15 15"><path d="M3 3.4L4.8 3L7.3 5.9L10.3 2.8L11 3.1L11 13.9L8.3 13.9L8.1 11.2L6.3 11.2L6.1 13.9L3.2 13.9Z" fill="#f00008"/></svg>
<span class="t" style="left:411px;top:133px;font-size:11.3px;color:#1f1f1f">Chord Display Transposer</span>
<svg class="a" style="left:747px;top:132px" width="12" height="12" viewBox="0 0 12 12"><path d="M1 1L11 11M11 1L1 11" stroke="#222" stroke-width="1.1"/></svg>

<span class="t" style="left:456px;top:166px;font-size:19px;font-weight:bold;color:#fff">Chord Display Transposer</span>
<span class="t" style="left:462px;top:202px;font-size:10.5px;color:#f0f0f0">Transpose chord display without affecting audio.</span>
<span class="t" style="left:451px;top:215px;font-size:10.5px;color:#f0f0f0">Useful for transposing instruments and pitch shifting.</span>

<!-- group: clip info -->
<div class="a" style="left:392px;top:260px;width:365px;height:77px;border:1px solid #3d6f9c;border-radius:5px"></div>
<div class="a" style="left:402px;top:255px;width:86px;height:8px;background:#000"></div>
<span class="t" style="left:407px;top:253px;font-size:10.4px;color:#f0f0f0">Clip Information</span>
<span class="t" style="left:402px;top:281px;font-size:10.5px;color:#f0f0f0">Clip:</span>
<span class="t" style="left:510px;top:281px;font-size:10.5px;font-weight:bold;color:#4a84bd;letter-spacing:0.72px">Bounced_1760085048_2_2_2_1</span>
<span class="t" style="left:402px;top:299px;font-size:10.5px;color:#f0f0f0">Chords detected:</span>
<span class="t" style="left:510px;top:299px;font-size:10.5px;color:#f0f0f0">14</span>
<span class="t" style="left:402px;top:317px;font-size:10.5px;color:#f0f0f0">Current transposition:</span>
<span class="t" style="left:509px;top:317px;font-size:10.5px;color:#f0f0f0">None</span>

<!-- group: transposition -->
<div class="a" style="left:392px;top:362px;width:365px;height:56px;border:1px solid #3d6f9c;border-radius:5px"></div>
<div class="a" style="left:402px;top:357px;width:74px;height:8px;background:#000"></div>
<span class="t" style="left:408px;top:355px;font-size:10.3px;color:#f0f0f0">Transposition</span>
<span class="t" style="left:402px;top:391px;font-size:10.1px;color:#f0f0f0">Semitones:</span>
<div class="a" style="left:459px;top:381px;width:97px;height:27px;border:1px solid #4a80b4"></div>
<div class="a" style="left:467px;top:389px;width:6px;height:12px;background:#1a72d0"></div>
<span class="t" style="left:467px;top:391px;font-size:10.1px;color:#f0f0f0">0 semitones</span>
<svg class="a" style="left:540px;top:385px" width="9" height="18" viewBox="0 0 9 18"><path d="M1.5 4.5L4.5 1.5L7.5 4.5Z M1.5 14L4.5 17L7.5 14Z" fill="#f0f0f0"/></svg>
<div class="a" style="left:561px;top:382px;width:58px;height:24px;border:1px solid #4a80b4"></div>
<span class="t" style="left:576px;top:389px;font-size:10.6px;color:#f0f0f0">Reset</span>

<!-- group: preview -->
<div class="a" style="left:392px;top:443px;width:365px;height:109px;border:1px solid #3d6f9c;border-radius:5px"></div>
<div class="a" style="left:402px;top:438px;width:50px;height:8px;background:#000"></div>
<span class="t" style="left:407px;top:434px;font-size:10.4px;color:#f0f0f0">Preview</span>
<div class="a" style="left:402px;top:461px;width:346px;height:81px;border:1px solid #4a80b4;overflow:hidden">
  <div class="a" style="left:336px;top:1px;width:8px;height:78px;background:#2d2d2d"></div>
  <div class="a" style="left:336px;top:1px;width:8px;height:35px;background:#555;border-radius:4px"></div>
</div>
<span class="t" style="left:406px;top:468px;font-size:10.5px;color:#f0f0f0">Transposition: +0 semitones</span>
<span class="t" style="left:412px;top:493.5px;font-size:10.2px;color:#f0f0f0">Dbmin7</span><span class="t" style="left:462px;top:493.5px;font-size:10.2px;color:#f0f0f0">Dbmin7</span><svg class="a" style="left:449.4px;top:495.5px" width="11.300000000000011" height="6" viewBox="0 0 11.300000000000011 6"><path d="M0 3H9.800000000000011" stroke="#f0f0f0" stroke-width="1"/><path d="M7.300000000000011 1L10.800000000000011 3L7.300000000000011 5Z" fill="#f0f0f0"/></svg>
<span class="t" style="left:415.3px;top:506.0px;font-size:10.2px;color:#f0f0f0">Aadd9</span><span class="t" style="left:461.6px;top:506.0px;font-size:10.2px;color:#f0f0f0">Aadd9</span><svg class="a" style="left:448.5px;top:508px" width="11.199999999999989" height="6" viewBox="0 0 11.199999999999989 6"><path d="M0 3H9.699999999999989" stroke="#f0f0f0" stroke-width="1"/><path d="M7.199999999999989 1L10.699999999999989 3L7.199999999999989 5Z" fill="#f0f0f0"/></svg>
<span class="t" style="left:426.5px;top:518.5px;font-size:10.2px;color:#f0f0f0">B</span><span class="t" style="left:448.5px;top:518.5px;font-size:10.2px;color:#f0f0f0">B</span><svg class="a" style="left:436px;top:520.5px" width="11.5" height="6" viewBox="0 0 11.5 6"><path d="M0 3H10.0" stroke="#f0f0f0" stroke-width="1"/><path d="M7.5 1L11.0 3L7.5 5Z" fill="#f0f0f0"/></svg>
<span class="t" style="left:415.3px;top:530.8px;font-size:10.2px;color:#f0f0f0">Amaj6</span><span class="t" style="left:460.7px;top:530.8px;font-size:10.2px;color:#f0f0f0">Amaj6</span><svg class="a" style="left:448px;top:533px" width="10.699999999999989" height="6" viewBox="0 0 10.699999999999989 6"><path d="M0 3H9.199999999999989" stroke="#f0f0f0" stroke-width="1"/><path d="M6.699999999999989 1L10.199999999999989 3L6.699999999999989 5Z" fill="#f0f0f0"/></svg>
<!-- dialog buttons -->
<div class="a" style="left:602px;top:566px;width:71px;height:30px;border:1px solid #4a80b4"></div>
<span class="t" style="left:622px;top:576px;font-size:10.5px;letter-spacing:-0.3px;color:#f0f0f0">Cancel</span>
<div class="btn" style="left:688px;top:567px;width:69px;height:28px;font-size:11px"><span class="t" style="left:19px;top:10px;">Apply</span></div>
</body></html>
